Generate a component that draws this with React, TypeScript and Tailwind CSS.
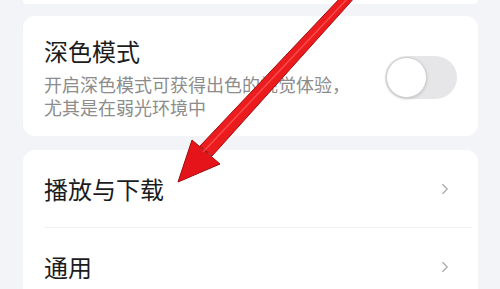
// Settings screen fragment: dark mode card + navigation rows, with a red annotation arrow.
import { ChevronRight } from "lucide-react";

const FONT = "font-['Noto_Sans_CJK_SC','Noto_Sans',sans-serif]";

function NavRow({ label, divider }: { label: string; divider?: boolean }) {
  return (
    <div className="relative flex h-[78px] items-center justify-between pl-[21px] pr-[24px]">
      <span className="text-[24px] leading-[32px] text-[#1c1c1c]">{label}</span>
      <ChevronRight className="h-[18px] w-[18px] text-[#a8a8a8]" strokeWidth={1.5} />
      {divider && (
        <div className="absolute bottom-0 left-[21px] right-[6px] h-px bg-[#f2f2f4]" />
      )}
    </div>
  );
}

function Toggle() {
  return (
    <div className="flex h-[43px] w-[72px] shrink-0 items-center rounded-full bg-[#e6e6e8] px-[1px]">
      <div className="h-[41px] w-[41px] rounded-full border border-[#cfcfcf] bg-white shadow-[0_1px_3px_rgba(0,0,0,0.15)]" />
    </div>
  );
}

function Arrow() {
  return (
    <svg
      className="pointer-events-none absolute left-0 top-0"
      width="500"
      height="289"
      viewBox="0 0 500 289"
    >
      <defs>
        <linearGradient id="shaft" x1="0" y1="0" x2="1" y2="1">
          <stop offset="0" stopColor="#ff2a2a" />
          <stop offset="1" stopColor="#d80e12" />
        </linearGradient>
      </defs>
      <polygon
        points="342,-4 356,-4 212,156 200,146"
        fill="url(#shaft)"
        stroke="#a30a0c"
        strokeWidth="1"
        strokeLinejoin="round"
      />
      <polygon
        points="178,182 192,140 220,164"
        fill="#e5141a"
        stroke="#a30a0c"
        strokeWidth="1"
        strokeLinejoin="round"
      />
      <line x1="350" y1="-4" x2="203" y2="152" stroke="#ff6a6a" strokeWidth="1.5" opacity="0.6" />
    </svg>
  );
}

export default function App() {
  return (
    <div className={`relative h-[289px] w-[500px] overflow-hidden bg-[#f2f4f8] ${FONT}`}>
      <div className="mx-[23px] h-[4px] w-[455px] rounded-b-xl bg-white" />

      <div className="mx-[23px] mt-[12px] flex w-[455px] items-center justify-between rounded-xl bg-white pb-[17px] pl-[21px] pr-[21px] pt-[19px]">
        <div>
          <div className="text-[24px] leading-[32px] text-[#1c1c1c]">深色模式</div>
          <div className="mt-[6px] text-[18px] leading-[23px] text-[#8c8c8c]">
            开启深色模式可获得出色的视觉体验，
            <br />
            尤其是在弱光环境中
          </div>
        </div>
        <Toggle />
      </div>

      <div className="mx-[23px] mt-[14px] w-[455px] rounded-xl bg-white">
        <NavRow label="播放与下载" divider />
        <NavRow label="通用" />
      </div>

      <Arrow />
    </div>
  );
}
